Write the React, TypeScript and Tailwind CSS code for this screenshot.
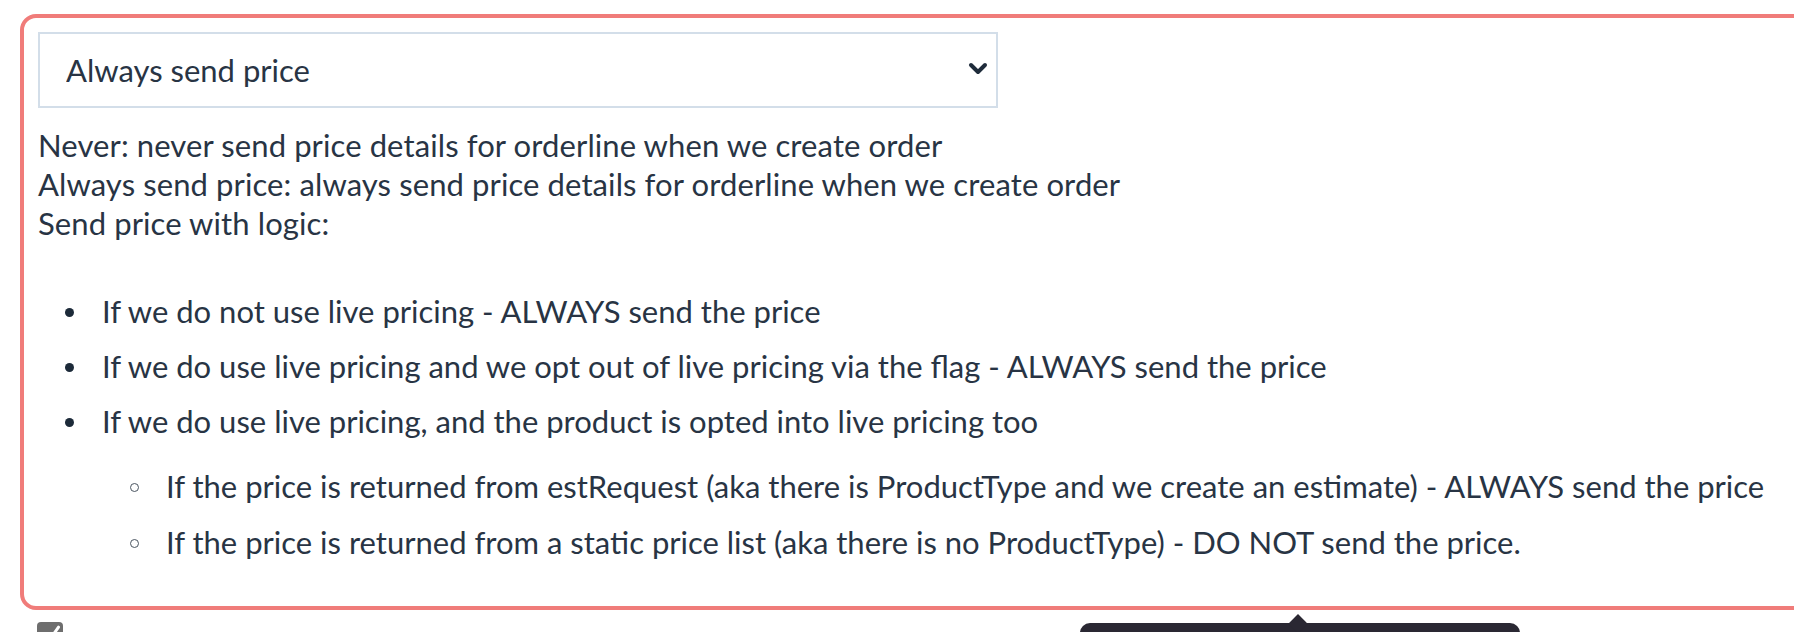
import React, { useState } from 'react';

const textFont = "font-['Lato',sans-serif]";

const Dot: React.FC<{ hollow?: boolean }> = ({ hollow }) => (
  <span className="w-[64px] shrink-0 h-[39px] flex items-center">
    {hollow ? (
      <span className="ml-[28px] mt-[1px] w-[9px] h-[9px] rounded-full border-[1.5px] border-[#4a5561]" />
    ) : (
      <span className="ml-[27px] mt-[1px] w-[9px] h-[9px] rounded-full bg-[#1c2a39]" />
    )}
  </span>
);

const Item: React.FC<{ hollow?: boolean; children: React.ReactNode }> = ({ hollow, children }) => (
  <li className="flex">
    <Dot hollow={hollow} />
    <span className="whitespace-nowrap">{children}</span>
  </li>
);

export default function App() {
  const [mode, setMode] = useState('always');

  return (
    <div className={`relative h-[632px] w-full overflow-hidden bg-white text-[#283444] ${textFont}`}>
      {/* field box with validation outline */}
      <div className="ml-[20px] mt-[14px] w-[1840px] border-4 border-[#f07c7a] rounded-[16px] pl-[14px] pt-[14px] pb-[44px]">
        <div className="relative w-[960px]">
          <select
            value={mode}
            onChange={(e) => setMode(e.target.value)}
            className={`block w-full h-[76px] appearance-none bg-white border-2 border-[#d3dee9] pl-[26px] text-[31px] text-[#283444] outline-none ${textFont}`}
          >
            <option value="never">Never</option>
            <option value="always">Always send price</option>
            <option value="logic">Send price with logic</option>
          </select>
          <svg
            className="absolute right-[9px] top-[29px] pointer-events-none"
            width="22"
            height="16"
            viewBox="0 0 22 16"
          >
            <path d="M4 4 L11 11 L18 4" fill="none" stroke="#1f2c3b" strokeWidth="4" strokeLinecap="round" strokeLinejoin="round" />
          </svg>
        </div>

        <div className="mt-[18px] text-[31px] leading-[39px] whitespace-nowrap tracking-[0.1px]">
          <p>Never: never send price details for orderline when we create order</p>
          <p>Always send price: always send price details for orderline when we create order</p>
          <p>Send price with logic:</p>
        </div>

        <ul className="mt-[49px] flex flex-col gap-[16px] text-[31px] leading-[39px]">
          <Item>If we do not use live pricing - ALWAYS send the price</Item>
          <Item>If we do use live pricing and we opt out of live pricing via the flag - ALWAYS send the price</Item>
          <li>
            <div className="flex">
              <Dot />
              <span className="whitespace-nowrap">If we do use live pricing, and the product is opted into live pricing too</span>
            </div>
            <ul className="mt-[26px] ml-[64px] flex flex-col gap-[17px]">
              <Item hollow>
                If the price is returned from estRequest (aka there is ProductType and we create an estimate) - ALWAYS send the price
              </Item>
              <Item hollow>
                If the price is returned from a static price list (aka there is no ProductType) - DO NOT send the price.
              </Item>
            </ul>
          </li>
        </ul>
      </div>

      {/* clipped icon below the box */}
      <div className="ml-[37px] mt-[12px] w-[26px] h-[26px] rounded-[4px] bg-[#6e6e6e] relative">
        <span className="absolute right-[5px] top-[3px] w-[3px] h-[10px] bg-white rotate-[35deg] rounded-full" />
      </div>

      {/* tooltip peeking in from the bottom */}
      <div className="absolute left-[1080px] top-[623px] w-[440px] h-[40px] rounded-[10px] bg-[#2a2833]">
        <span className="absolute left-[211px] top-[-6px] w-[14px] h-[14px] bg-[#2a2833] rotate-45" />
      </div>
    </div>
  );
}
